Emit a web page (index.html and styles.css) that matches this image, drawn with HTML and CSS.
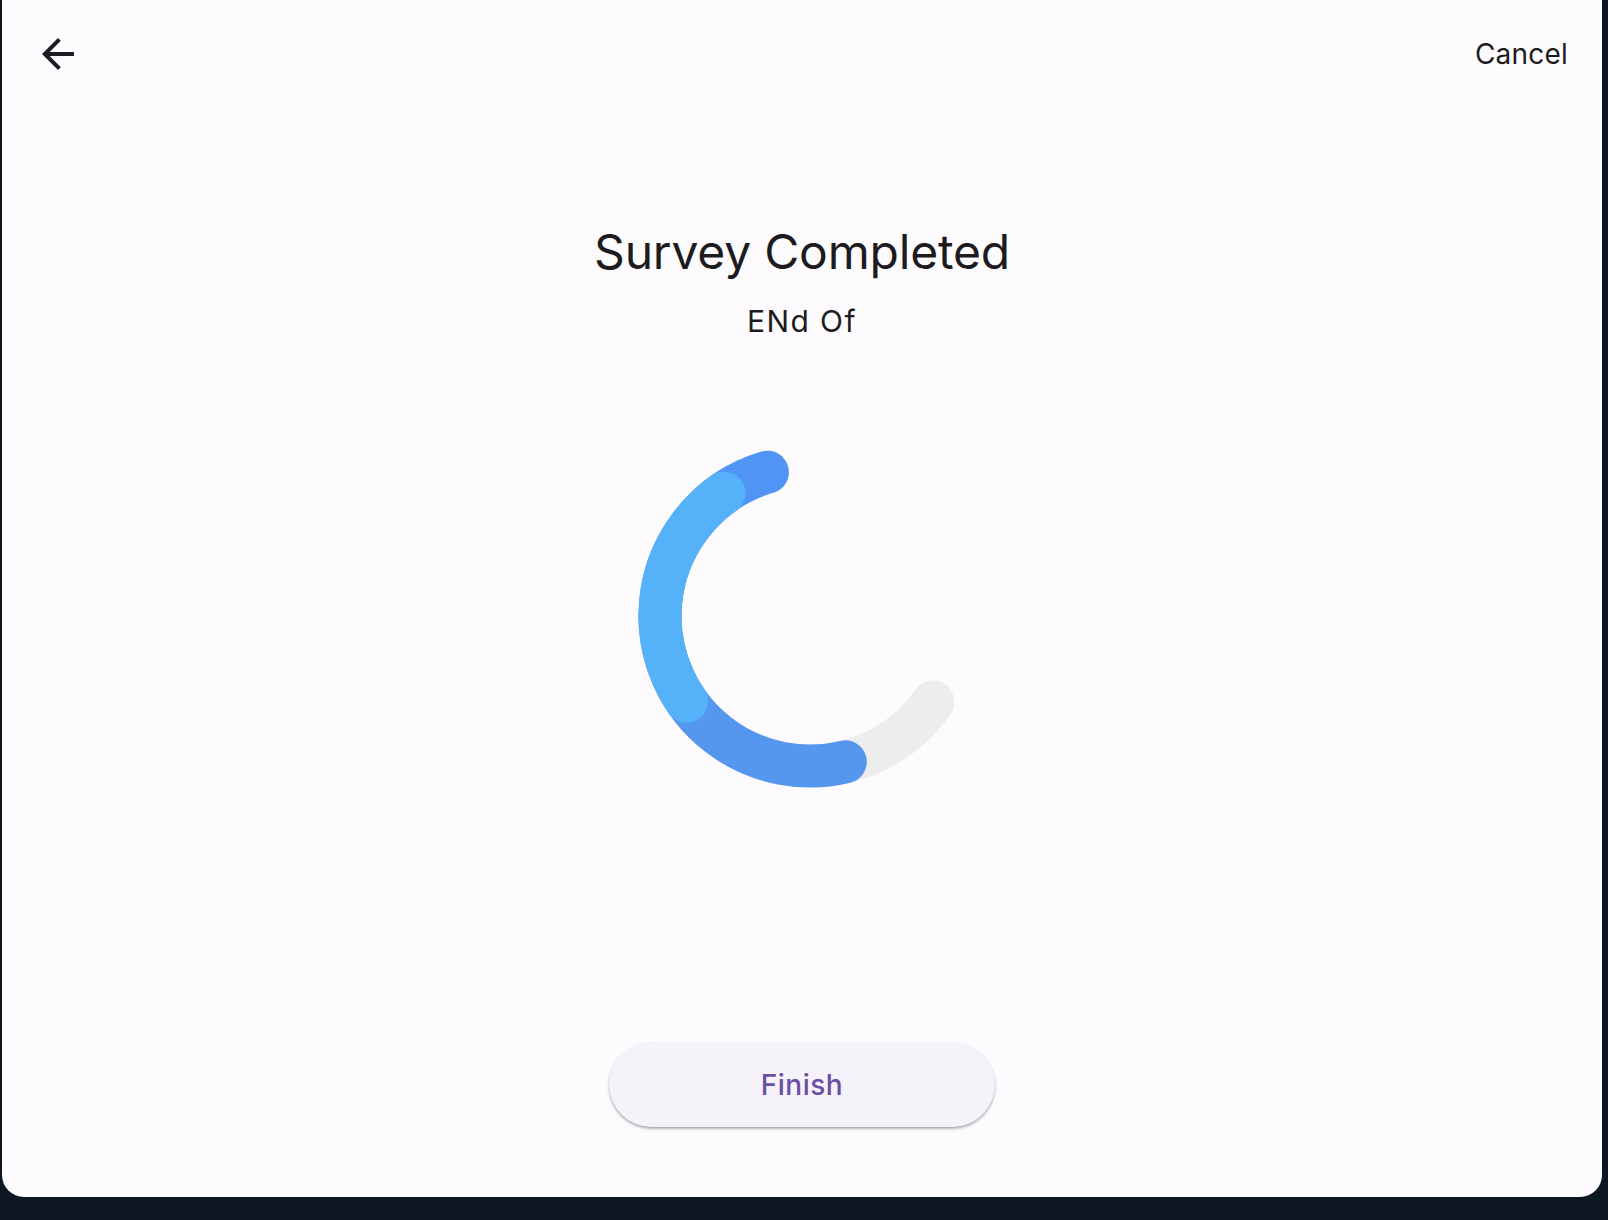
FILE: index.html
```html
<!DOCTYPE html>
<html lang="en">
<head>
<meta charset="utf-8">
<title>Survey Completed</title>
<link rel="stylesheet" href="styles.css">
</head>
<body>
<div class="panel">
  <header class="topbar">
    <button class="icon-btn" aria-label="Back">
      <svg width="48" height="48" viewBox="0 0 24 24"><path d="M20 11H7.83l5.59-5.59L12 4l-8 8 8 8 1.41-1.41L7.83 13H20v-2z" fill="#1d1b20"/></svg>
    </button>
    <span class="cancel">Cancel</span>
  </header>
  <h1 class="title">Survey Completed</h1>
  <p class="subtitle">ENd Of</p>
  <svg class="spinner" width="400" height="400" viewBox="0 0 400 400">
    <g fill="none" stroke-width="43" stroke-linecap="round">
      <path d="M330.9 286 A150 150 0 0 1 181.95 347.7" stroke="#ededed"/>
      <path d="M243.3 345.8 A150 150 0 0 1 58 200" stroke="#5596ee"/>
      <path d="M58 200 A150 150 0 0 1 165.4 56.2" stroke="#5094f5"/>
      <path d="M84.5 285.2 A150 150 0 0 1 122 77.1" stroke="#56b2f8"/>
    </g>
  </svg>
  <button class="finish">Finish</button>
</div>
</body>
</html>
```
FILE: styles.css
```css
html, body {
  margin: 0;
  padding: 0;
}
body {
  background: #0c1721;
  height: 1220px;
  overflow: hidden;
  font-family: Inter, "Noto Sans", sans-serif;
  color: #1d1b20;
}
.panel {
  margin: 0 6px 0 2px;
  height: 1197px;
  background: #fdfbfe;
  border-radius: 0 0 22px 22px;
  display: flex;
  flex-direction: column;
  align-items: center;
}
.topbar {
  align-self: stretch;
  height: 108px;
  display: flex;
  justify-content: space-between;
  align-items: center;
  padding: 0 34px 0 32px;
}
.icon-btn {
  border: 0;
  background: none;
  padding: 0;
  width: 48px;
  height: 48px;
  display: flex;
}
.cancel {
  font-size: 28px;
  letter-spacing: 0.2px;
  line-height: 36px;
}
.title {
  margin: 116px 0 0;
  font-size: 48px;
  line-height: 56px;
  font-weight: 400;
  letter-spacing: -0.2px;
}
.subtitle {
  margin: 23px 0 0;
  font-size: 30px;
  line-height: 36px;
  letter-spacing: 1.4px;
}
.spinner {
  margin-top: 77px;
  display: block;
}
.finish {
  margin-top: 226px;
  width: 386px;
  height: 85px;
  border: 0;
  border-radius: 43px;
  background: #f5f2f9;
  box-shadow: 0 2px 3px rgba(0, 0, 0, 0.28), 0 1px 1px rgba(0,0,0,0.08);
  font-family: Inter, "Noto Sans", sans-serif;
  font-size: 28px;
  font-weight: 500;
  color: #6750a4;
  letter-spacing: 0.5px;
}
```
